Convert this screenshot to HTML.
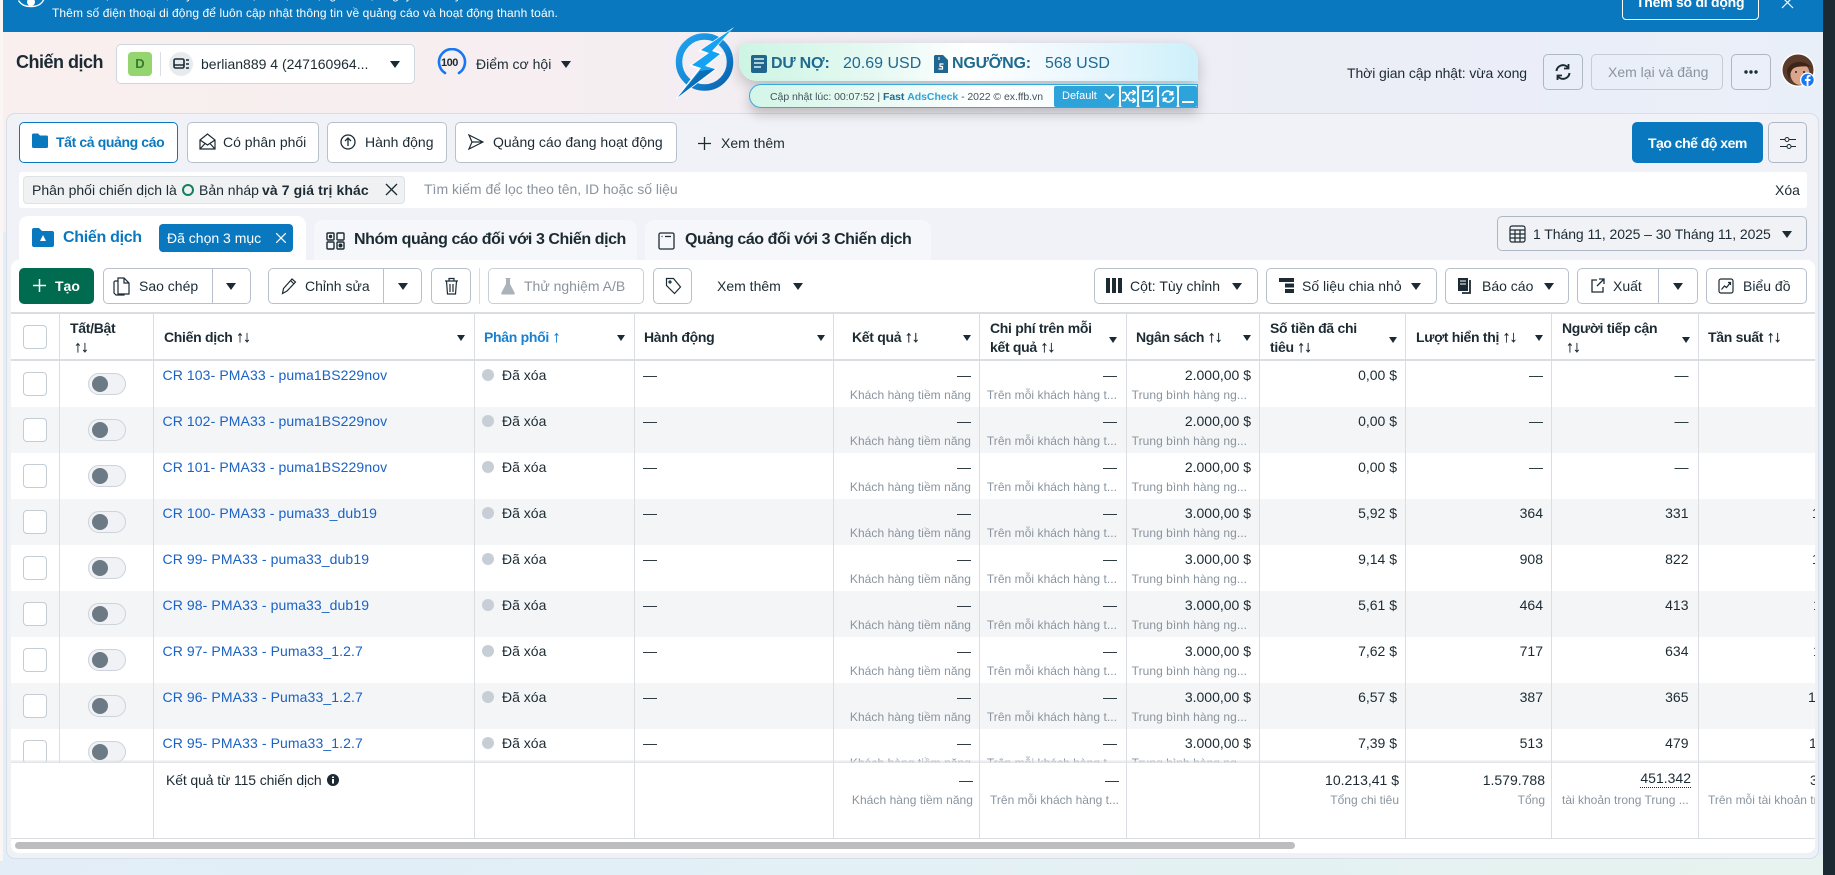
<!DOCTYPE html>
<html lang="vi"><head><meta charset="utf-8"><title>Chiến dịch</title>
<style>
html,body{margin:0;padding:0;width:1835px;height:875px;overflow:hidden;background:#e3eef8;font-family:"Liberation Sans","Noto Sans CJK SC",sans-serif;color:#1c2b33;font-size:14px}
div,span,svg{box-sizing:border-box}
.abs,.t,.b,.a,svg{position:absolute}
.t{white-space:nowrap;line-height:20px}
.st{font-weight:700}
.hd{font-weight:700;letter-spacing:-.3px}
.hd span{font-size:16px;font-weight:400;letter-spacing:-1px;-webkit-text-stroke:.3px currentColor}
.b{border:1px solid #b8c1cb;border-radius:5px;background:#fff}
.tr{background:transparent;border-color:#aeb8c4}
.a{width:0;height:0;border-left:5.5px solid transparent;border-right:5.5px solid transparent;border-top:7px solid #1c2b33}
.a.s{border-left-width:4px;border-right-width:4px;border-top-width:6px}
.g{color:#8a949e}
.v{position:absolute;width:1px;background:#dadde1}
.r{position:absolute;left:0;width:1815px;height:46px}
.r.z::before{content:"";position:absolute;left:11px;right:0;top:0;bottom:0;background:#f3f5f7}
.cb{position:absolute;left:23px;top:11px;width:24px;height:24px;border:1px solid #c4ccd4;border-radius:4px;background:#fff}
.tg{position:absolute;left:88px;top:12px;width:38px;height:22px;border:1px solid #ccd3da;border-radius:11px;background:#f0f2f5}
.tg::after{content:"";position:absolute;left:3px;top:2px;width:16px;height:16px;border-radius:50%;background:#6b7a84}
.n,.d,.s2,.st2,.h,.c,.u{position:absolute;white-space:nowrap;line-height:18px}
.n{left:162.5px;top:5px;color:#1a62c4;letter-spacing:.1px}
.d{left:482px;top:8px;width:12px;height:12px;border-radius:50%;background:#c8ced6}
.st2{left:502px;top:5px}
.h{left:643px;top:5px}
.c{top:5px;text-align:right}
.u{top:25px;font-size:12px;color:#8a949e;text-align:right;letter-spacing:.05px}
.c1{right:844px}.c2{right:698px}.c3{right:564px}.u.c3{right:568px}.c4{right:418px}.c5{right:272px}.c6{right:126.5px}
.f1{position:absolute;left:1811px;top:5px;line-height:18px}
</style></head><body>

<!-- backgrounds -->
<div class="abs" style="left:0;top:32px;width:1823px;height:200px;background:linear-gradient(90deg,#f9efee 0%,#f6eef0 30%,#eeedf5 55%,#e9eff9 100%)"></div>
<div class="abs" style="left:0;top:855px;width:1823px;height:20px;background:linear-gradient(90deg,#e2edf8 0%,#e3f0f5 50%,#e6f3ee 100%)"></div>
<div class="abs" style="left:1823px;top:0;width:12px;height:875px;background:#1c2b33"></div>
<div class="abs" style="left:0;top:0;width:3px;height:861px;background:#fbf6f6"></div>

<!-- top banner -->
<div class="abs" style="left:3px;top:0;width:1820px;height:32px;background:#0a78be;overflow:hidden">
  <div class="t" style="left:49px;top:-15px;color:#fff;font-size:12px">Để bảo mật tài khoản, hãy thêm số điện thoại di động của bạn ngay hôm nay</div>
  <div class="t" style="left:49px;top:3px;color:#fff;font-size:12px;letter-spacing:.09px">Thêm số điện thoại di động để luôn cập nhật thông tin về quảng cáo và hoạt động thanh toán.</div>
  <svg style="left:14px;top:-12px" width="30" height="20" viewBox="0 0 30 20" fill="none" stroke="#fff" stroke-width="1.4"><path d="M1.500 12.500C5 18 10 18.500 14 18.500S24 18 27 11"/><circle cx="14" cy="14" r="4" fill="#fff" stroke="none"/></svg>
  <div class="abs" style="left:1618.5px;top:-14px;width:137px;height:34px;border:1px solid #fff;border-radius:4px"></div>
  <div class="t" style="left:1633px;top:-8px;color:#fff;font-weight:700;font-size:14px;letter-spacing:-.25px">Thêm số di động</div>
  <svg style="left:1778px;top:-4px" width="13" height="13" viewBox="0 0 13 13" stroke="#fff" stroke-width="1.2"><path d="M1 1l11 11M12 1L1 12"/></svg>
</div>

<!-- header -->
<div class="t" style="left:16px;top:51px;font-size:18px;font-weight:700;line-height:22px;letter-spacing:-.5px">Chiến dịch</div>
<div class="b" style="left:116px;top:44px;width:299px;height:40px;border-color:#d0d6dd"></div>
<div class="abs" style="left:128px;top:52px;width:24px;height:24px;border-radius:4px;background:#94d56f;color:#38792f;font-weight:700;font-size:13px;text-align:center;line-height:24px">D</div>
<div class="abs" style="left:160px;top:52px;width:1px;height:24px;background:#dadde1"></div>
<div class="abs" style="left:169px;top:52px;width:24px;height:24px;border-radius:50%;background:#e8ebee"></div>
<svg style="left:173px;top:57px" width="17" height="14" viewBox="0 0 17 14" fill="none" stroke="#1c2b33" stroke-width="1.6"><rect x="1" y="2" width="10" height="9" rx="1.5"/><path d="M1 8h10M13 3h3M13 7h3M13 11h3"/></svg>
<div class="t" style="left:201px;top:54px;font-size:14px">berlian889 4 (247160964...</div>
<div class="a" style="left:390px;top:61px"></div>
<svg style="left:436px;top:48px" width="32" height="28" viewBox="0 0 32 28" fill="none"><path d="M9 25A13 13 0 1 1 23 25" stroke="#1877f2" stroke-width="2.6" stroke-linecap="round"/></svg>
<div class="t" style="left:441px;top:53px;font-size:11px;font-weight:700;letter-spacing:-.5px">100</div>
<div class="t" style="left:476px;top:54px">Điểm cơ hội</div>
<div class="a" style="left:561px;top:61px"></div>

<div class="t" style="left:1347px;top:63px;letter-spacing:-.1px">Thời gian cập nhật: vừa xong</div>
<div class="b tr" style="left:1543px;top:54px;width:40px;height:36px"></div>
<svg style="left:1554px;top:63px" width="18" height="18" viewBox="0 0 18 18" fill="none" stroke="#1c2b33" stroke-width="2"><path d="M2.5 8A6.5 6.5 0 0 1 14 4.5M15.500 10A6.500 6.500 0 0 1 4 13.500"/><path d="M14.500 1v4.500H10M3.500 17v-4.500H8" stroke-width="1.800"/></svg>
<div class="b tr" style="left:1591px;top:54px;width:132px;height:36px;border-color:#c5cdd6"></div>
<div class="t g" style="left:1608px;top:62px">Xem lại và đăng</div>
<div class="b tr" style="left:1731px;top:54px;width:40px;height:36px"></div>
<svg style="left:1744px;top:70px" width="14" height="4" viewBox="0 0 14 4" fill="#1c2b33"><circle cx="2" cy="2" r="1.700"/><circle cx="7" cy="2" r="1.700"/><circle cx="12" cy="2" r="1.700"/></svg>
<svg style="left:1780px;top:53px;overflow:visible" width="36" height="36" viewBox="0 0 36 36">
<circle cx="18" cy="17" r="17" fill="#fff"/><circle cx="18" cy="17" r="15.500" fill="#5a3a2a"/><ellipse cx="20" cy="21" rx="9.500" ry="11" fill="#d9a68c"/><path d="M7 19c0-10 16-14 24-5-6-1-13-1-17 1-3 2-4 6-5 12z" fill="#3d2418"/><circle cx="16" cy="19" r="1" fill="#3d2418"/><circle cx="24" cy="19" r="1" fill="#3d2418"/>
<circle cx="27.500" cy="27" r="7.500" fill="#fff"/><circle cx="27.500" cy="27" r="6.200" fill="#1877f2"/><path d="M28.500 33v-5h1.800l.3-2h-2.100v-1.200c0-.6.3-1 1-1h1.100v-1.800c-.5-.1-1-.1-1.500-.1-1.600 0-2.500 1-2.500 2.600V26h-1.700v2h1.700v5z" fill="#fff"/></svg>

<!-- panel -->
<div class="abs" style="left:6px;top:113px;width:1813px;height:746px;border:1px solid #d8dee5;border-radius:9px;background:linear-gradient(180deg,#f1f2f7,#eef2f6)"></div>

<!-- view tabs -->
<div class="b" style="left:19px;top:122px;width:159px;height:41px;border-color:#0a78be"></div>
<svg style="left:32px;top:133px" width="16" height="15" viewBox="0 0 16 15"><path d="M0 2a1.500 1.500 0 0 1 1.500-1.500H6L8 2.500h6.500A1.500 1.500 0 0 1 16 4v9.500a1.500 1.500 0 0 1-1.500 1.500h-13A1.500 1.500 0 0 1 0 13.500z" fill="#0a78be"/></svg>
<div class="t st" style="left:56px;top:132px;color:#0a78be;letter-spacing:-.38px">Tất cả quảng cáo</div>
<div class="b" style="left:187px;top:122px;width:132px;height:41px"></div>
<svg style="left:199px;top:133px" width="17" height="17" viewBox="0 0 17 17" fill="none" stroke="#1c2b33" stroke-width="1.200"><path d="M1 7L8.500 1 16 7v9H1zM1 7l7.500 5L16 7M1 16l5.500-6M16 16l-5.500-6"/></svg>
<div class="t" style="left:223px;top:132px">Có phân phối</div>
<div class="b" style="left:327px;top:122px;width:120px;height:41px"></div>
<svg style="left:340px;top:134px" width="16" height="16" viewBox="0 0 16 16" fill="none" stroke="#1c2b33" stroke-width="1.300"><circle cx="8" cy="8" r="7"/><path d="M8 12V4.500M5 7l3-3 3 3"/></svg>
<div class="t" style="left:365px;top:132px">Hành động</div>
<div class="b" style="left:455px;top:122px;width:222px;height:41px"></div>
<svg style="left:468px;top:134px" width="16" height="16" viewBox="0 0 16 16" fill="none" stroke="#1c2b33" stroke-width="1.200"><path d="M1 1l14 7-14 7 3-7zM4 8h11"/></svg>
<div class="t" style="left:493px;top:132px">Quảng cáo đang hoạt động</div>
<svg style="left:698px;top:137px" width="13" height="13" viewBox="0 0 13 13" stroke="#1c2b33" stroke-width="1.300"><path d="M6.500 0v13M0 6.500h13"/></svg>
<div class="t" style="left:721px;top:133px">Xem thêm</div>
<div class="b" style="left:1632px;top:122px;width:131px;height:41px;background:#0a78be;border-color:#0a78be"></div>
<div class="t st" style="left:1648px;top:133px;color:#fff;letter-spacing:-.5px">Tạo chế độ xem</div>
<div class="b tr" style="left:1768px;top:122px;width:39px;height:41px"></div>
<svg style="left:1780px;top:136px" width="16" height="14" viewBox="0 0 16 14" fill="none" stroke="#1c2b33" stroke-width="1"><path d="M0 3.500h5M9 3.500h7M0 10.500h7M11 10.500h5"/><circle cx="7" cy="3.500" r="2"/><circle cx="9" cy="10.500" r="2"/></svg>

<!-- filter -->
<div class="abs" style="left:19px;top:172px;width:1788px;height:36px;background:#fff;border-radius:3px"></div>
<div class="abs" style="left:23px;top:176px;width:382px;height:28px;background:#eff1f3;border:1px solid #dfe3e7;border-radius:4px"></div>
<div class="t" style="left:32px;top:180px">Phân phối chiến dịch là</div>
<div class="abs" style="left:182px;top:184px;width:12px;height:12px;border:2px solid #13805f;border-radius:50%"></div>
<div class="t" style="left:199px;top:180px">Bản nháp</div>
<div class="t st" style="left:262px;top:180px;letter-spacing:.1px">và 7 giá trị khác</div>
<svg style="left:385px;top:183px" width="13" height="13" viewBox="0 0 13 13" stroke="#1c2b33" stroke-width="1.300"><path d="M1 1l11 11M12 1L1 12"/></svg>
<div class="t g" style="left:424px;top:179px">Tìm kiếm để lọc theo tên, ID hoặc số liệu</div>
<div class="t" style="left:1775px;top:180px">Xóa</div>

<!-- object tabs -->
<div class="abs" style="left:19px;top:216px;width:287px;height:50px;background:#fff;border-radius:9px 9px 0 0"></div>
<svg style="left:32px;top:228px" width="22" height="19" viewBox="0 0 22 19"><path d="M0 2a2 2 0 0 1 2-2h5l3 3h10a2 2 0 0 1 2 2v12a2 2 0 0 1-2 2H2a2 2 0 0 1-2-2z" fill="#0a78be"/><path d="M11 7l3 6H8z" fill="#fff"/></svg>
<div class="t st" style="left:63px;top:228px;font-size:16px;color:#0a78be;letter-spacing:-.3px">Chiến dịch</div>
<div class="abs" style="left:159px;top:224px;width:134px;height:28px;background:#0a78be;border-radius:4px"></div>
<div class="t" style="left:167px;top:228px;color:#fff">Đã chọn 3 mục</div>
<svg style="left:276px;top:233px" width="10" height="10" viewBox="0 0 10 10" stroke="#fff" stroke-width="1.200"><path d="M0 0l10 10M10 0L0 10"/></svg>
<div class="abs" style="left:314px;top:220px;width:323px;height:42px;background:#f5f7fa;border-radius:9px 9px 0 0"></div>
<svg style="left:326px;top:232px" width="19" height="18" viewBox="0 0 19 18" fill="none" stroke="#1c2b33" stroke-width="1.400"><rect x="1" y="1" width="7" height="7" rx="1"/><rect x="11" y="1" width="7" height="7" rx="1"/><rect x="1" y="10" width="7" height="7" rx="1"/><rect x="11" y="10" width="7" height="7" rx="1"/><circle cx="4.500" cy="4.500" r="1" fill="#1c2b33"/><circle cx="14.500" cy="13.500" r="1.300" fill="#1c2b33"/></svg>
<div class="t st" style="left:354px;top:230px;font-size:16px;letter-spacing:-.43px">Nhóm quảng cáo đối với 3 Chiến dịch</div>
<div class="abs" style="left:645px;top:220px;width:286px;height:42px;background:#f5f7fa;border-radius:9px 9px 0 0"></div>
<svg style="left:658px;top:232px" width="17" height="18" viewBox="0 0 17 18" fill="none" stroke="#1c2b33" stroke-width="1.300"><rect x="1" y="1" width="15" height="16" rx="1.500"/><path d="M3.500 4.500h1M7 4.500h6"/></svg>
<div class="t st" style="left:685px;top:230px;font-size:16px;letter-spacing:-.45px">Quảng cáo đối với 3 Chiến dịch</div>
<div class="b" style="left:1497px;top:216px;width:310px;height:35px;background:#f0f2f6;border-color:#aeb8c4"></div>
<svg style="left:1509px;top:225px" width="17" height="18" viewBox="0 0 17 18" fill="none" stroke="#1c2b33" stroke-width="1.200"><rect x="1" y="1" width="15" height="16" rx="2"/><path d="M1 5h15M1 9h15M1 13h15M6 5v12M11 5v12"/></svg>
<div class="t" style="left:1533px;top:224px;letter-spacing:-.07px">1 Tháng 11, 2025 – 30 Tháng 11, 2025</div>
<div class="a" style="left:1782px;top:231px"></div>

<!-- table shell -->
<div class="abs" style="left:11px;top:260px;width:1804px;height:593px;background:#fff;border-radius:8px"></div>

<!-- toolbar -->
<div class="abs" style="left:19px;top:268px;width:75px;height:36px;background:#006b4e;border-radius:5px"></div>
<svg style="left:33px;top:279px" width="13" height="13" viewBox="0 0 13 13" stroke="#fff" stroke-width="1.500"><path d="M6.500 0v13M0 6.500h13"/></svg>
<div class="t st" style="left:55px;top:276px;color:#fff">Tạo</div>
<div class="b" style="left:103px;top:268px;width:148px;height:36px"></div>
<div class="abs" style="left:212px;top:268px;width:1px;height:36px;background:#b8c1cb"></div>
<svg style="left:113px;top:276px" width="17" height="20" viewBox="0 0 17 20" fill="none" stroke="#1c2b33" stroke-width="1.200"><path d="M5 2h6l5 5v11H5zM11 2v5h5M5 5H2l-1 1v11l2 2h8v-1"/></svg>
<div class="t" style="left:139px;top:276px">Sao chép</div>
<div class="a" style="left:226px;top:283px"></div>
<div class="b" style="left:268px;top:268px;width:154px;height:36px"></div>
<div class="abs" style="left:383px;top:268px;width:1px;height:36px;background:#b8c1cb"></div>
<svg style="left:281px;top:277px" width="16" height="18" viewBox="0 0 16 18" fill="none" stroke="#1c2b33" stroke-width="1.200"><path d="M1.500 16.500l1-5L11 2l3.500 3-8.500 9zM9.500 3.500L13 7"/></svg>
<div class="t" style="left:305px;top:276px">Chỉnh sửa</div>
<div class="a" style="left:398px;top:283px"></div>
<div class="b" style="left:431px;top:268px;width:40px;height:36px"></div>
<svg style="left:444px;top:277px" width="15" height="18" viewBox="0 0 15 18" fill="none" stroke="#1c2b33" stroke-width="1.200"><path d="M1 4h13M5 4V1.500h5V4M2.500 4l1 13h8l1-13M6 7v8M9 7v8"/></svg>
<div class="abs" style="left:479px;top:268px;width:1px;height:36px;background:#dadde1"></div>
<div class="b" style="left:488px;top:268px;width:156px;height:36px;border-color:#c8cfd7"></div>
<svg style="left:500px;top:277px" width="16" height="18" viewBox="0 0 16 18"><path d="M5.500 1h5v1H10v5l5 9.500-1 1H2l-1-1L6 7V2h-.5z" fill="#aab2ba"/></svg>
<div class="t g" style="left:524px;top:276px">Thử nghiệm A/B</div>
<div class="b" style="left:653px;top:268px;width:39px;height:36px"></div>
<svg style="left:665px;top:277px" width="17" height="18" viewBox="0 0 17 18" fill="none" stroke="#1c2b33" stroke-width="1.200"><path d="M1.500 1.500h7l7 8.500-6 6.500-8-8z"/><circle cx="5" cy="5" r="1"/></svg>
<div class="t" style="left:717px;top:276px">Xem thêm</div>
<div class="a" style="left:793px;top:283px"></div>

<div class="b" style="left:1094px;top:268px;width:164px;height:36px"></div>
<svg style="left:1106px;top:278px" width="16" height="15" viewBox="0 0 16 15" fill="#1c2b33"><rect width="4" height="15"/><rect x="6" width="4" height="15"/><rect x="12" width="4" height="15"/></svg>
<div class="t" style="left:1130px;top:276px">Cột: Tùy chỉnh</div>
<div class="a" style="left:1232px;top:283px"></div>
<div class="b" style="left:1266px;top:268px;width:171px;height:36px"></div>
<svg style="left:1279px;top:278px" width="15" height="15" viewBox="0 0 15 15" fill="#1c2b33"><rect width="15" height="4"/><rect x="6" y="5.500" width="9" height="4"/><rect x="6" y="11" width="9" height="4"/></svg>
<div class="t" style="left:1302px;top:276px">Số liệu chia nhỏ</div>
<div class="a" style="left:1411px;top:283px"></div>
<div class="b" style="left:1445px;top:268px;width:124px;height:36px"></div>
<svg style="left:1457px;top:277px" width="16" height="18" viewBox="0 0 16 18"><path d="M1 1h10v13H1z" fill="#1c2b33"/><path d="M3 4h6M3 7h6" stroke="#fff"/><path d="M13 3v13H5" fill="none" stroke="#1c2b33" stroke-width="1.800"/></svg>
<div class="t" style="left:1482px;top:276px">Báo cáo</div>
<div class="a" style="left:1543.500px;top:283px"></div>
<div class="b" style="left:1577px;top:268px;width:121px;height:36px"></div>
<div class="abs" style="left:1658px;top:268px;width:1px;height:36px;background:#b8c1cb"></div>
<svg style="left:1591px;top:278px" width="14" height="15" viewBox="0 0 14 15" fill="none" stroke="#1c2b33" stroke-width="1.300"><path d="M6 2H1v12h11V9M8 1h5v5M13 1L6 8"/></svg>
<div class="t" style="left:1613px;top:276px">Xuất</div>
<div class="a" style="left:1673px;top:283px"></div>
<div class="b" style="left:1706px;top:268px;width:101px;height:36px"></div>
<svg style="left:1718px;top:278px" width="16" height="16" viewBox="0 0 16 16" fill="none" stroke="#1c2b33" stroke-width="1.200"><rect x="1" y="1" width="14" height="14" rx="2"/><path d="M3.500 11.500l3-3.500 2 1.500 4-5M10 4.500h2.500V7"/></svg>
<div class="t" style="left:1743px;top:276px">Biểu đồ</div>

<!-- rows -->
<div class="abs" style="left:0;top:0;width:1815px;height:763px;overflow:hidden">
<div class="r" style="top:361px"><div class="cb"></div><div class="tg"></div><div class="n">CR 103- PMA33 - puma1BS229nov</div><div class="d"></div><div class="st2">Đã xóa</div><div class="h">—</div><div class="c c1">—</div><div class="u c1">Khách hàng tiềm năng</div><div class="c c2">—</div><div class="u c2">Trên mỗi khách hàng t...</div><div class="c c3">2.000,00 $</div><div class="u c3">Trung bình hàng ng...</div><div class="c c4">0,00 $</div><div class="c c5">—</div><div class="c c6">—</div></div>
<div class="r z" style="top:407px"><div class="cb"></div><div class="tg"></div><div class="n">CR 102- PMA33 - puma1BS229nov</div><div class="d"></div><div class="st2">Đã xóa</div><div class="h">—</div><div class="c c1">—</div><div class="u c1">Khách hàng tiềm năng</div><div class="c c2">—</div><div class="u c2">Trên mỗi khách hàng t...</div><div class="c c3">2.000,00 $</div><div class="u c3">Trung bình hàng ng...</div><div class="c c4">0,00 $</div><div class="c c5">—</div><div class="c c6">—</div></div>
<div class="r" style="top:453px"><div class="cb"></div><div class="tg"></div><div class="n">CR 101- PMA33 - puma1BS229nov</div><div class="d"></div><div class="st2">Đã xóa</div><div class="h">—</div><div class="c c1">—</div><div class="u c1">Khách hàng tiềm năng</div><div class="c c2">—</div><div class="u c2">Trên mỗi khách hàng t...</div><div class="c c3">2.000,00 $</div><div class="u c3">Trung bình hàng ng...</div><div class="c c4">0,00 $</div><div class="c c5">—</div><div class="c c6">—</div></div>
<div class="r z" style="top:499px"><div class="cb"></div><div class="tg"></div><div class="n">CR 100- PMA33 - puma33_dub19</div><div class="d"></div><div class="st2">Đã xóa</div><div class="h">—</div><div class="c c1">—</div><div class="u c1">Khách hàng tiềm năng</div><div class="c c2">—</div><div class="u c2">Trên mỗi khách hàng t...</div><div class="c c3">3.000,00 $</div><div class="u c3">Trung bình hàng ng...</div><div class="c c4">5,92 $</div><div class="c c5">364</div><div class="c c6">331</div><div class="f1" style="left:1812px">1</div></div>
<div class="r" style="top:545px"><div class="cb"></div><div class="tg"></div><div class="n">CR 99- PMA33 - puma33_dub19</div><div class="d"></div><div class="st2">Đã xóa</div><div class="h">—</div><div class="c c1">—</div><div class="u c1">Khách hàng tiềm năng</div><div class="c c2">—</div><div class="u c2">Trên mỗi khách hàng t...</div><div class="c c3">3.000,00 $</div><div class="u c3">Trung bình hàng ng...</div><div class="c c4">9,14 $</div><div class="c c5">908</div><div class="c c6">822</div><div class="f1" style="left:1812px">1</div></div>
<div class="r z" style="top:591px"><div class="cb"></div><div class="tg"></div><div class="n">CR 98- PMA33 - puma33_dub19</div><div class="d"></div><div class="st2">Đã xóa</div><div class="h">—</div><div class="c c1">—</div><div class="u c1">Khách hàng tiềm năng</div><div class="c c2">—</div><div class="u c2">Trên mỗi khách hàng t...</div><div class="c c3">3.000,00 $</div><div class="u c3">Trung bình hàng ng...</div><div class="c c4">5,61 $</div><div class="c c5">464</div><div class="c c6">413</div><div class="f1" style="left:1813px">1</div></div>
<div class="r" style="top:637px"><div class="cb"></div><div class="tg"></div><div class="n">CR 97- PMA33 - Puma33_1.2.7</div><div class="d"></div><div class="st2">Đã xóa</div><div class="h">—</div><div class="c c1">—</div><div class="u c1">Khách hàng tiềm năng</div><div class="c c2">—</div><div class="u c2">Trên mỗi khách hàng t...</div><div class="c c3">3.000,00 $</div><div class="u c3">Trung bình hàng ng...</div><div class="c c4">7,62 $</div><div class="c c5">717</div><div class="c c6">634</div><div class="f1" style="left:1813px">1</div></div>
<div class="r z" style="top:683px"><div class="cb"></div><div class="tg"></div><div class="n">CR 96- PMA33 - Puma33_1.2.7</div><div class="d"></div><div class="st2">Đã xóa</div><div class="h">—</div><div class="c c1">—</div><div class="u c1">Khách hàng tiềm năng</div><div class="c c2">—</div><div class="u c2">Trên mỗi khách hàng t...</div><div class="c c3">3.000,00 $</div><div class="u c3">Trung bình hàng ng...</div><div class="c c4">6,57 $</div><div class="c c5">387</div><div class="c c6">365</div><div class="f1" style="left:1808px">1</div></div>
<div class="r" style="top:729px"><div class="cb"></div><div class="tg"></div><div class="n">CR 95- PMA33 - Puma33_1.2.7</div><div class="d"></div><div class="st2">Đã xóa</div><div class="h">—</div><div class="c c1">—</div><div class="u c1">Khách hàng tiềm năng</div><div class="c c2">—</div><div class="u c2">Trên mỗi khách hàng t...</div><div class="c c3">3.000,00 $</div><div class="u c3">Trung bình hàng ng...</div><div class="c c4">7,39 $</div><div class="c c5">513</div><div class="c c6">479</div><div class="f1" style="left:1809px">1</div></div>
</div>
<div class="abs" style="left:11px;top:760px;width:1804px;height:3px;background:linear-gradient(180deg,rgba(220,222,225,.2),#dfe1e4)"></div>

<!-- lines -->
<div class="abs" style="left:11px;top:312px;width:1804px;height:2px;background:#dadde1"></div>
<div class="abs" style="left:11px;top:359px;width:1804px;height:2px;background:#dadde1"></div>
<div class="abs" style="left:11px;top:838px;width:1804px;height:1px;background:#dadde1"></div>
<div class="v" style="left:59px;top:312px;height:451px"></div>
<div class="v" style="left:153px;top:312px;height:526px"></div>
<div class="v" style="left:474px;top:312px;height:526px"></div>
<div class="v" style="left:634px;top:312px;height:526px"></div>
<div class="v" style="left:833px;top:312px;height:526px"></div>
<div class="v" style="left:979px;top:312px;height:526px"></div>
<div class="v" style="left:1126px;top:312px;height:526px"></div>
<div class="v" style="left:1259px;top:312px;height:526px"></div>
<div class="v" style="left:1405px;top:312px;height:526px"></div>
<div class="v" style="left:1551px;top:312px;height:526px"></div>
<div class="v" style="left:1698px;top:312px;height:526px"></div>

<!-- table header -->
<div class="abs" style="left:23px;top:325px;width:24px;height:24px;border:1px solid #c4ccd4;border-radius:4px;background:#fff"></div>
<div class="t hd" style="left:70px;top:318px">Tất/Bật</div>
<div class="t hd" style="left:74px;top:337px"><span>↑↓</span></div>
<div class="t hd" style="left:164px;top:327px">Chiến dịch <span>↑↓</span></div><div class="a s" style="left:457px;top:335px"></div>
<div class="t hd" style="left:484px;top:327px;color:#1a80d0">Phân phối <span>↑</span></div><div class="a s" style="left:617px;top:335px"></div>
<div class="t hd" style="left:644px;top:327px">Hành động</div><div class="a s" style="left:817px;top:335px"></div>
<div class="t hd" style="left:852px;top:327px">Kết quả <span>↑↓</span></div><div class="a s" style="left:963px;top:335px"></div>
<div class="t hd" style="left:990px;top:318px">Chi phí trên mỗi</div><div class="t hd" style="left:990px;top:337px">kết quả <span>↑↓</span></div><div class="a s" style="left:1109px;top:337px"></div>
<div class="t hd" style="left:1136px;top:327px">Ngân sách <span>↑↓</span></div><div class="a s" style="left:1243px;top:335px"></div>
<div class="t hd" style="left:1270px;top:318px">Số tiền đã chi</div><div class="t hd" style="left:1270px;top:337px">tiêu <span>↑↓</span></div><div class="a s" style="left:1389px;top:337px"></div>
<div class="t hd" style="left:1416px;top:327px">Lượt hiển thị <span>↑↓</span></div><div class="a s" style="left:1535px;top:335px"></div>
<div class="t hd" style="left:1562px;top:318px">Người tiếp cận</div><div class="t hd" style="left:1566px;top:337px"><span>↑↓</span></div><div class="a s" style="left:1682px;top:337px"></div>
<div class="t hd" style="left:1708px;top:327px">Tần suất <span>↑↓</span></div>

<!-- footer -->
<div class="t" style="left:166px;top:770px;letter-spacing:-.12px">Kết quả từ 115 chiến dịch</div>
<svg style="left:327px;top:774px" width="12" height="12" viewBox="0 0 12 12"><circle cx="6" cy="6" r="6" fill="#1c2b33"/><path d="M5 5h2v4.500H5zM5 2.500h2v1.500H5z" fill="#fff"/></svg>
<div class="t" style="right:862px;top:770px">—</div>
<div class="t g" style="right:862px;top:790px;font-size:12px;letter-spacing:.05px">Khách hàng tiềm năng</div>
<div class="t" style="right:716px;top:770px">—</div>
<div class="t g" style="right:716px;top:790px;font-size:12px">Trên mỗi khách hàng t...</div>
<div class="t" style="right:436px;top:770px">10.213,41 $</div>
<div class="t g" style="right:436px;top:790px;font-size:12px">Tổng chi tiêu</div>
<div class="t" style="right:290px;top:770px">1.579.788</div>
<div class="t g" style="right:290px;top:790px;font-size:12px">Tổng</div>
<div class="t" style="right:144px;top:770px;border-bottom:1px dotted #1c2b33;line-height:17px">451.342</div>
<div class="t g" style="left:1562px;top:790px;font-size:12px">tài khoản trong Trung ...</div>
<div class="abs" style="left:1699px;top:760px;width:116px;height:60px;overflow:hidden">
  <div class="t" style="left:111px;top:10px">3</div>
  <div class="t g" style="left:9px;top:30px;font-size:12px">Trên mỗi tài khoản trong</div>
</div>

<!-- scrollbar -->
<div class="abs" style="left:15px;top:842px;width:1280px;height:7px;background:#bdbdbd;border-radius:4px"></div>

<!-- extension widget -->
<svg style="left:674px;top:26px" width="62" height="74" viewBox="0 0 62 74">
<defs><linearGradient id="lg" x1="0" y1="0" x2="1" y2="1"><stop offset="0" stop-color="#22a3ee"/><stop offset=".55" stop-color="#1488d8"/><stop offset="1" stop-color="#0a5da8"/></linearGradient></defs>
<circle cx="30.500" cy="36" r="25.500" fill="none" stroke="url(#lg)" stroke-width="6.500"/>
<path d="M60 1L24 25l8 3-17 12 9 3L1 74l42-31-10-3 16-13-9-3z" fill="#fff"/>
<path d="M58 3L27 24l8 3-17 12 9 3L4 71l37-28-10-3 15-12-8-3z" fill="#15a2f2"/>
<path d="M41 43L4 71l22-26z" fill="#0c6cb4"/>
</svg>
<div class="abs" style="left:739px;top:43px;width:459px;height:38px;border-radius:6px 18px 0 18px;background:linear-gradient(90deg,#cdf5e4 0%,#e6f9f2 30%,#fff 50%,#eaf7fd 75%,#cdf0fa 100%);box-shadow:0 5px 14px rgba(0,0,0,.22)"></div>
<svg style="left:751px;top:55px" width="16" height="18" viewBox="0 0 16 18"><rect width="16" height="18" rx="2" fill="#20668f"/><path d="M3 4h10M3 8h10M3 12h7" stroke="#d8f5ee" stroke-width="1.500"/></svg>
<div class="t" style="left:771px;top:54px;font-size:16px;font-weight:700;color:#1f6a91;letter-spacing:-.2px">DƯ NỢ:</div>
<div class="t" style="left:843px;top:54px;font-size:16px;color:#1f6a91">20.69 USD</div>
<svg style="left:934px;top:55px" width="14" height="18" viewBox="0 0 14 18"><path d="M1 0h8l5 5v13H0V1z" fill="#20668f"/><path d="M5 2v3" stroke="#fff"/><path d="M9.500 9H6v2.500h2.500V14H4.500" fill="none" stroke="#fff" stroke-width="1.200"/></svg>
<div class="t" style="left:952px;top:54px;font-size:16px;font-weight:700;color:#1f6a91;letter-spacing:-.2px">NGƯỠNG:</div>
<div class="t" style="left:1045px;top:54px;font-size:16px;color:#1f6a91">568 USD</div>

<div class="abs" style="left:749px;top:84px;width:449px;height:24px;border:1px solid #35a8dc;border-radius:12px 0 0 12px;background:linear-gradient(90deg,#d3f5e8,#fff 55%,#e5f6fc);box-shadow:0 6px 12px rgba(0,0,0,.22)"></div>
<div class="t" style="left:770px;top:87px;font-size:10.500px;color:#44535c;letter-spacing:-.05px">Cập nhật lúc: 00:07:52 | <b style="color:#1f6a91">Fast</b> <b style="color:#2ea3da">AdsCheck</b> - 2022 © ex.ffb.vn</div>
<div class="abs" style="left:1054px;top:86px;width:65px;height:21px;background:#2ea3da;border-radius:2px"></div>
<div class="t" style="left:1062px;top:86px;color:#fff;font-size:11px">Default</div>
<svg style="left:1104px;top:93px" width="11" height="7" viewBox="0 0 11 7" fill="none" stroke="#fff" stroke-width="1.600"><path d="M1 1l4.500 4.500L10 1"/></svg>
<div class="abs" style="left:1121px;top:86px;width:16px;height:21px;background:#2ea3da;border-radius:2px"></div>
<svg style="left:1122px;top:90px" width="14" height="13" viewBox="0 0 14 13" fill="none" stroke="#fff" stroke-width="1.600"><path d="M0 2.500h3l5 8h3.500M0 10.500h3l5-8h3.500M10.500 0l3 2.500-3 2.500M10.500 8l3 2.500-3 2.500"/></svg>
<div class="abs" style="left:1139px;top:86px;width:18px;height:21px;background:#2ea3da;border-radius:2px"></div>
<svg style="left:1141px;top:89px" width="14" height="14" viewBox="0 0 14 14" fill="none" stroke="#fff" stroke-width="1.700"><path d="M8 2H2v10h9V6M6 8l6-6.500"/></svg>
<div class="abs" style="left:1159px;top:86px;width:18px;height:21px;background:#2ea3da;border-radius:2px"></div>
<svg style="left:1161px;top:90px" width="14" height="13" viewBox="0 0 14 13" fill="none" stroke="#fff" stroke-width="1.800"><path d="M1.500 6A5 5 0 0 1 11 4M12.500 7A5 5 0 0 1 3 9M11.500 1v3.500H8M2.500 12V8.500H6"/></svg>
<div class="abs" style="left:1179px;top:86px;width:18px;height:21px;background:#2ea3da;border-radius:2px"></div>
<div class="abs" style="left:1182px;top:101px;width:12px;height:2px;background:#fff"></div>

</body></html>
